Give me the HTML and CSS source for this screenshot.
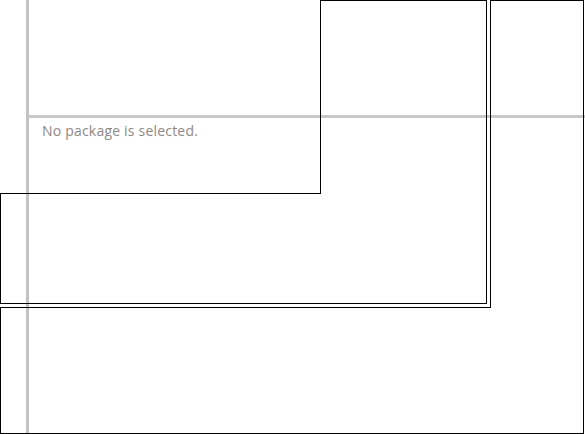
FILE: index.html
```html
<!DOCTYPE html>
<html>
<head>
<meta charset="utf-8">
<link rel="stylesheet" href="styles.css">
</head>
<body>
<div class="window">
  <div class="sidebar"></div>
  <div class="vsplit"></div>
  <div class="main">
    <div class="list-pane"></div>
    <div class="hsplit"></div>
    <div class="details">No package is selected.</div>
  </div>
  <svg class="outlines" width="585" height="434" viewBox="0 0 585 434">
    <polygon points="320.5,0.5 486.5,0.5 486.5,303.5 0.5,303.5 0.5,193.5 320.5,193.5" />
    <polygon points="490.5,0.5 583.5,0.5 583.5,433.5 0.5,433.5 0.5,307.5 490.5,307.5" />
  </svg>
</div>
</body>
</html>
```
FILE: styles.css
```css
html, body {
  margin: 0;
  padding: 0;
  background: #ffffff;
}
.window {
  position: relative;
  width: 585px;
  height: 434px;
  display: flex;
  overflow: hidden;
  font-family: "Open Sans", "DejaVu Sans", sans-serif;
}
.sidebar {
  width: 26px;
  flex: none;
}
.vsplit {
  width: 3px;
  flex: none;
  background: #c4c2c0;
}
.main {
  flex: 1;
  display: flex;
  flex-direction: column;
}
.list-pane {
  height: 115px;
  flex: none;
}
.hsplit {
  height: 3px;
  flex: none;
  background: #c8c8c8;
}
.details {
  padding: 5px 13px;
  font-size: 14px;
  line-height: 16px;
  letter-spacing: 0.2px;
  color: #8e8883;
}
.outlines {
  position: absolute;
  top: 0;
  left: 0;
  pointer-events: none;
}
.outlines polygon {
  fill: none;
  stroke: #000000;
  stroke-width: 1;
  shape-rendering: crispEdges;
}
```
